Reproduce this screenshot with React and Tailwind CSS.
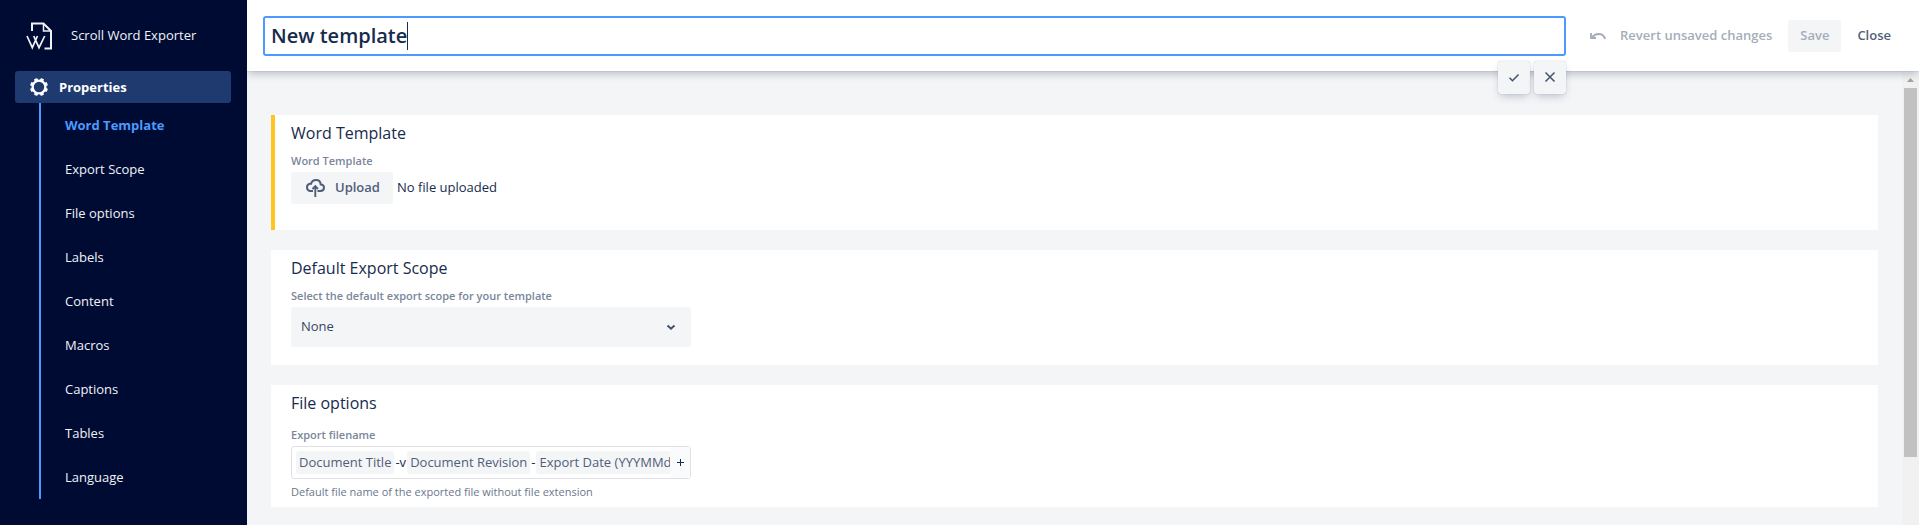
// App.jsx
import { useState } from 'react';

const SECTIONS = [
  'Word Template',
  'Export Scope',
  'File options',
  'Labels',
  'Content',
  'Macros',
  'Captions',
  'Tables',
  'Language',
];

const FILENAME_PARTS = [
  { tag: true, text: 'Document Title' },
  { tag: false, text: '-v' },
  { tag: true, text: 'Document Revision' },
  { tag: false, text: '-' },
  { tag: true, text: 'Export Date (YYYMMdd)' },
];

function Logo() {
  return (
    <svg className="w-[26px] h-7" viewBox="0 0 26 28" fill="none" stroke="currentColor" strokeWidth="2">
      <path d="M6 9V1.500h11.500L25 9v17.500h-6.500" />
      <path d="M17.500 2v7H25" strokeWidth="1.500" />
      <path d="M1 14l5.300 11.700L11.500 14M7.700 14L13 25.700L18.700 14" strokeWidth="1.700" />
    </svg>
  );
}

function GearIcon() {
  const teeth = [22.5, 67.5, 112.5, 157.5, 202.5, 247.5, 292.5, 337.5];
  return (
    <svg className="w-[18px] h-[18px]" viewBox="0 0 18 18">
      <circle cx="9" cy="9" r="6.400" fill="none" stroke="currentColor" strokeWidth="2.400" />
      {teeth.map((deg) => (
        <rect key={deg} x="7.2" y="0" width="3.6" height="3" rx="0.8" fill="currentColor" transform={`rotate(${deg} 9 9)`} />
      ))}
    </svg>
  );
}

function UndoIcon() {
  return (
    <svg className="w-4 h-4" viewBox="0 0 16 16" fill="none" stroke="currentColor" strokeWidth="2">
      <path d="M1 5v5h5" strokeWidth="1.800" />
      <path d="M1.800 9.500C5.500 5 12.500 4.200 15.200 10.800" />
    </svg>
  );
}

function CloudUploadIcon() {
  return (
    <svg className="w-5 h-5" viewBox="0 0 20 20" fill="none" stroke="currentColor" strokeWidth="2">
      <path d="M8 13H5a3.700 3.700 0 0 1-.3-7.200C5.300 5.600 6 5.800 6 5.800 6.800 3.300 8.500 2 11 2c2.800 0 4.500 1.700 4.700 4.400C17.800 6.500 19 7.800 19 9.600 19 11.600 17.500 13 15.500 13H12.500" />
      <path d="M10.300 19V8.500M7.500 11l2.800-2.800L13 11" strokeWidth="1.900" />
    </svg>
  );
}

function Sidebar() {
  return (
    <aside className="w-[247px] shrink-0 bg-[#000b33] text-[#f0f2f7] px-[15px] text-[13px]">
      <div className="h-[71px] flex items-center pl-[11px] gap-[19px]">
        <Logo />
        <span className="font-medium">Scroll Word Exporter</span>
      </div>
      <nav>
        <a href="#properties" className="flex items-center h-8 rounded-[3px] bg-[#1f3a6e] text-white font-bold pl-[15px] mr-px gap-[11px]">
          <GearIcon />
          <span className="pt-0.5">Properties</span>
        </a>
        <ul className="ml-6 border-l-2 border-[#4c9aff] pl-6">
          {SECTIONS.map((name, i) => (
            <li key={name}>
              <a
                href={`#section-${i}`}
                className={i === 0 ? 'flex items-center h-11 pt-0.5 font-bold text-[#4c9aff]' : 'flex items-center h-11 pt-0.5 font-medium'}
              >
                {name}
              </a>
            </li>
          ))}
        </ul>
      </nav>
    </aside>
  );
}

function Header() {
  const [title, setTitle] = useState('New template');

  return (
    <header className="relative z-10 flex items-center h-[71px] bg-white pl-4 pr-3 shadow-[0_4px_8px_-1px_rgba(9,30,66,0.25),0_0_1px_rgba(9,30,66,0.3)]">
      <div className="relative flex-1">
        <label className="flex items-center h-10 border-2 border-[#4c9aff] rounded-[3px] pl-[6px] bg-white">
          <input
            aria-label="Template name"
            value={title}
            onChange={(e) => setTitle(e.target.value)}
            className="field-sizing-content caret-transparent outline-none text-[20px] font-semibold text-[#172b4d]"
          />
          <span className="w-px h-7 bg-[#172b4d]" />
        </label>
        {/* Inline edit confirm / cancel */}
        <div className="absolute right-0 top-[45px] flex gap-1 text-[#42526e]">
          <button aria-label="Confirm" className="w-8 h-[33px] flex items-center justify-center rounded-[3px] bg-[#f4f5f7] shadow-[0_4px_8px_-2px_rgba(9,30,66,0.25),0_0_1px_rgba(9,30,66,0.31)]">
            <svg className="w-4 h-4" viewBox="0 0 16 16" fill="none" stroke="currentColor" strokeWidth="1.500">
              <path d="M3.500 8.800L6.500 11.800L12.500 5.500" />
            </svg>
          </button>
          <button aria-label="Cancel" className="w-8 h-[33px] flex items-center justify-center rounded-[3px] bg-[#f4f5f7] shadow-[0_4px_8px_-2px_rgba(9,30,66,0.25),0_0_1px_rgba(9,30,66,0.31)]">
            <svg className="w-4 h-4" viewBox="0 0 16 16" fill="none" stroke="currentColor" strokeWidth="1.500">
              <path d="M3.500 3.500l9 9M12.500 3.500l-9 9" />
            </svg>
          </button>
        </div>
      </div>
      <div className="flex items-center text-[13px] font-semibold text-[#a5adba] ml-6">
        <button className="flex items-center gap-[14px] whitespace-nowrap">
          <UndoIcon />
          Revert unsaved changes
        </button>
        <button className="h-8 px-3 ml-4 rounded-[3px] bg-[#f4f5f7]">Save</button>
        <button className="h-8 px-4 text-[#505f79]">Close</button>
      </div>
    </header>
  );
}

function Card({ title, active, children }) {
  return (
    <section
      className={
        active
          ? 'min-h-[115px] bg-white border-l-4 border-[#ffc420] pl-4 pr-5 pt-2'
          : 'min-h-[115px] bg-white pl-5 pr-5 pt-2'
      }
    >
      <h2 className="text-[16px] leading-5 text-[#172b4d]">{title}</h2>
      {children}
    </section>
  );
}

function Scrollbar() {
  return (
    <div className="w-[17px] shrink-0 bg-[#f1f1f1] flex flex-col items-center pt-[7px]">
      <svg className="w-[7px] h-1 text-[#a3a3a3]" viewBox="0 0 7 4">
        <path d="M0 4L3.500 0L7 4Z" fill="currentColor" />
      </svg>
      <div className="w-[13px] h-[369px] mt-[6px] bg-[#c1c1c1]" />
    </div>
  );
}

export default function App() {
  const [scope, setScope] = useState('None');

  return (
    <div className="flex min-h-screen bg-[#f4f5f7] text-[#172b4d] font-['Open_Sans','Noto_Sans',sans-serif]">
      <Sidebar />
      <div className="flex-1 min-w-0 flex flex-col">
        <Header />
        <div className="flex flex-1">
          <main className="flex-1 min-w-0 flex flex-col gap-5 pt-11 px-6">
            <Card title="Word Template" active>
              <p className="text-[11px] leading-4 font-semibold text-[#7a869a] mt-[10px]">Word Template</p>
              <div className="flex items-center gap-1 mt-[3px] text-[13px]">
                <button className="flex items-center gap-[10px] h-8 pl-[14px] pr-[13px] rounded-[3px] bg-[#f4f5f7] font-semibold text-[#505f79]">
                  <CloudUploadIcon />
                  Upload
                </button>
                <span>No file uploaded</span>
              </div>
            </Card>

            <Card title="Default Export Scope">
              <label htmlFor="scope" className="block text-[11px] leading-4 font-semibold text-[#7a869a] mt-[10px]">
                Select the default export scope for your template
              </label>
              <div className="relative w-[400px] mt-[3px]">
                <select
                  id="scope"
                  value={scope}
                  onChange={(e) => setScope(e.target.value)}
                  className="appearance-none w-full h-10 px-[10px] rounded-[3px] bg-[#f4f5f7] text-[13px] text-[#344563]"
                >
                  <option>None</option>
                </select>
                <svg className="absolute right-3 top-3 w-4 h-4 text-[#42526e] pointer-events-none" viewBox="0 0 16 16" fill="none" stroke="currentColor" strokeWidth="2">
                  <path d="M4.500 6.500L8 9.700L11.500 6.500" />
                </svg>
              </div>
            </Card>

            <Card title="File options">
              <p className="text-[11px] leading-4 font-semibold text-[#7a869a] mt-[14px]">Export filename</p>
              <div className="flex w-[400px] h-[33px] mt-[3px] border border-[#dfe1e6] rounded-[3px] text-[13px]">
                <div className="flex-1 min-w-0 flex items-center overflow-hidden pl-1 whitespace-nowrap">
                  {FILENAME_PARTS.map((part) => (
                    <span
                      key={part.text}
                      className={
                        part.tag
                          ? 'shrink-0 h-[23px] leading-[23px] px-[3px] rounded-[3px] bg-[#f4f5f7] text-[#505f79]'
                          : 'shrink-0 px-px leading-5 pb-0.5'
                      }
                    >
                      {part.text}
                    </span>
                  ))}
                </div>
                <button aria-label="Add placeholder" className="w-5 shrink-0 flex items-center justify-center bg-[#fafbfc]">
                  <svg className="w-[7px] h-[7px]" viewBox="0 0 7 7" stroke="currentColor">
                    <path d="M0 3.500h7M3.500 0v7" />
                  </svg>
                </button>
              </div>
              <p className="text-[11px] leading-4 text-[#6b778c] mt-[5px] pb-[7px]">
                Default file name of the exported file without file extension
              </p>
            </Card>
          </main>
          <Scrollbar />
        </div>
      </div>
    </div>
  );
}
